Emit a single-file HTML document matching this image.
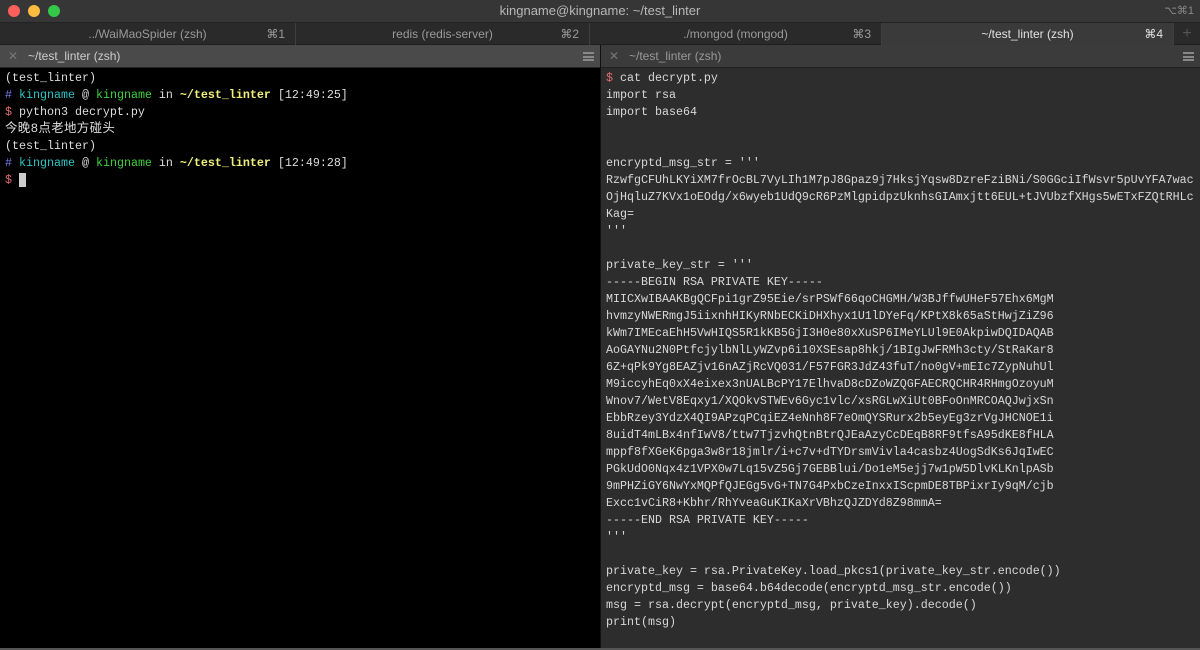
<!DOCTYPE html>
<html><head><meta charset="utf-8"><style>
*{margin:0;padding:0;box-sizing:border-box}
body{width:1200px;height:650px;background:#2d2d2d;overflow:hidden;font-family:"Liberation Sans",sans-serif;position:relative}
.title{position:absolute;left:0;top:0;width:1200px;height:23px;background:#363636;color:#b8b8b8;font-size:13px;text-align:center;line-height:22px;border-bottom:1px solid #222}
.dot{position:absolute;top:5px;width:12px;height:12px;border-radius:50%}
.tabs{position:absolute;top:23px;left:0;width:1200px;height:22px;background:#2a2a2a;border-bottom:1px solid #1e1e1e}
.tab{position:absolute;top:0;height:22px;color:#9a9a9a;font-size:12px;line-height:22px;text-align:center;border-right:1px solid #3e3e3e}
.tab .k{position:absolute;right:10px;top:0}
.ph{position:absolute;top:45px;height:23px;font-size:12px;line-height:23px;color:#aaa;border-bottom:1px solid #222}
.ham{position:absolute;right:6px;top:7px;width:11px;height:9px;border-top:2px solid #888;border-bottom:2px solid #888}
.ham:after{content:"";position:absolute;left:0;top:1.5px;width:11px;height:2px;background:#888}
pre{font-family:"Liberation Mono","Noto Sans CJK SC",monospace;font-size:11.67px;line-height:17px;position:absolute;white-space:pre}
.p{color:#e06c6c}.c{color:#2ec4c4}.g{color:#3fcf3f}.y{color:#f0f07a;font-weight:bold}.b{color:#7b7bf0}
</style></head><body>
<div class="title">kingname@kingname: ~/test_linter
<div class="dot" style="left:8px;background:#fc605c"></div>
<div class="dot" style="left:28px;background:#fdbc40"></div>
<div class="dot" style="left:48px;background:#34c84a"></div>
<span style="position:absolute;right:6px;top:0;font-size:11px;color:#888">⌥⌘1</span></div>
<div class="tabs">
<div class="tab" style="left:0;width:296px">../WaiMaoSpider (zsh)<span class="k">⌘1</span></div>
<div class="tab" style="left:296px;width:294px">redis (redis-server)<span class="k">⌘2</span></div>
<div class="tab" style="left:590px;width:292px">./mongod (mongod)<span class="k">⌘3</span></div>
<div class="tab" style="left:882px;width:292px;background:#3a3a3a;color:#e0e0e0">~/test_linter (zsh)<span class="k">⌘4</span></div>
<div class="tab" style="left:1174px;width:26px;color:#555;font-size:16px;border:none">+</div>
</div>
<div class="ph" style="left:0;width:600px;background:#4a4a4a;color:#ccc"><span style="position:absolute;left:8px;color:#777">✕</span><span style="position:absolute;left:28px">~/test_linter (zsh)</span><div class="ham"></div></div>
<div class="ph" style="left:601px;width:599px;background:#3b3b3b;color:#999"><span style="position:absolute;left:8px;color:#777">✕</span><span style="position:absolute;left:28px">~/test_linter (zsh)</span><div class="ham"></div></div>
<div style="position:absolute;left:0;top:68px;width:600px;height:582px;background:#000"></div>
<div style="position:absolute;left:600px;top:45px;width:1px;height:605px;background:#111"></div>
<div style="position:absolute;left:0;top:648px;width:1200px;height:2px;background:#555"></div>
<pre style="left:5px;top:70px;color:#ddd">(test_linter)
<span class="b">#</span> <span class="c">kingname</span> @ <span class="g">kingname</span> in <span class="y">~/test_linter</span> [12:49:25]
<span class="p">$</span> python3 decrypt.py
<span style="font-size:12.5px;letter-spacing:0.3px">今晚8点老地方碰头</span>
(test_linter)
<span class="b">#</span> <span class="c">kingname</span> @ <span class="g">kingname</span> in <span class="y">~/test_linter</span> [12:49:28]
<span class="p">$</span> <span style="background:#ccc">&nbsp;</span></pre>
<pre style="left:606px;top:70px;color:#d8d8d8"><span class="p">$</span> cat decrypt.py
import rsa
import base64


encryptd_msg_str = '''
RzwfgCFUhLKYiXM7frOcBL7VyLIh1M7pJ8Gpaz9j7HksjYqsw8DzreFziBNi/S0GGciIfWsvr5pUvYFA7wac
OjHqluZ7KVx1oEOdg/x6wyeb1UdQ9cR6PzMlgpidpzUknhsGIAmxjtt6EUL+tJVUbzfXHgs5wETxFZQtRHLc
Kag=
'''

private_key_str = '''
-----BEGIN RSA PRIVATE KEY-----
MIICXwIBAAKBgQCFpi1grZ95Eie/srPSWf66qoCHGMH/W3BJffwUHeF57Ehx6MgM
hvmzyNWERmgJ5iixnhHIKyRNbECKiDHXhyx1U1lDYeFq/KPtX8k65aStHwjZiZ96
kWm7IMEcaEhH5VwHIQS5R1kKB5GjI3H0e80xXuSP6IMeYLUl9E0AkpiwDQIDAQAB
AoGAYNu2N0PtfcjylbNlLyWZvp6i10XSEsap8hkj/1BIgJwFRMh3cty/StRaKar8
6Z+qPk9Yg8EAZjv16nAZjRcVQ031/F57FGR3JdZ43fuT/no0gV+mEIc7ZypNuhUl
M9iccyhEq0xX4eixex3nUALBcPY17ElhvaD8cDZoWZQGFAECRQCHR4RHmgOzoyuM
Wnov7/WetV8Eqxy1/XQOkvSTWEv6Gyc1vlc/xsRGLwXiUt0BFoOnMRCOAQJwjxSn
EbbRzey3YdzX4QI9APzqPCqiEZ4eNnh8F7eOmQYSRurx2b5eyEg3zrVgJHCNOE1i
8uidT4mLBx4nfIwV8/ttw7TjzvhQtnBtrQJEaAzyCcDEqB8RF9tfsA95dKE8fHLA
mppf8fXGeK6pga3w8r18jmlr/i+c7v+dTYDrsmVivla4casbz4UogSdKs6JqIwEC
PGkUdO0Nqx4z1VPX0w7Lq15vZ5Gj7GEBBlui/Do1eM5ejj7w1pW5DlvKLKnlpASb
9mPHZiGY6NwYxMQPfQJEGg5vG+TN7G4PxbCzeInxxIScpmDE8TBPixrIy9qM/cjb
Excc1vCiR8+Kbhr/RhYveaGuKIKaXrVBhzQJZDYd8Z98mmA=
-----END RSA PRIVATE KEY-----
'''

private_key = rsa.PrivateKey.load_pkcs1(private_key_str.encode())
encryptd_msg = base64.b64decode(encryptd_msg_str.encode())
msg = rsa.decrypt(encryptd_msg, private_key).decode()
print(msg)</pre>
</body></html>
